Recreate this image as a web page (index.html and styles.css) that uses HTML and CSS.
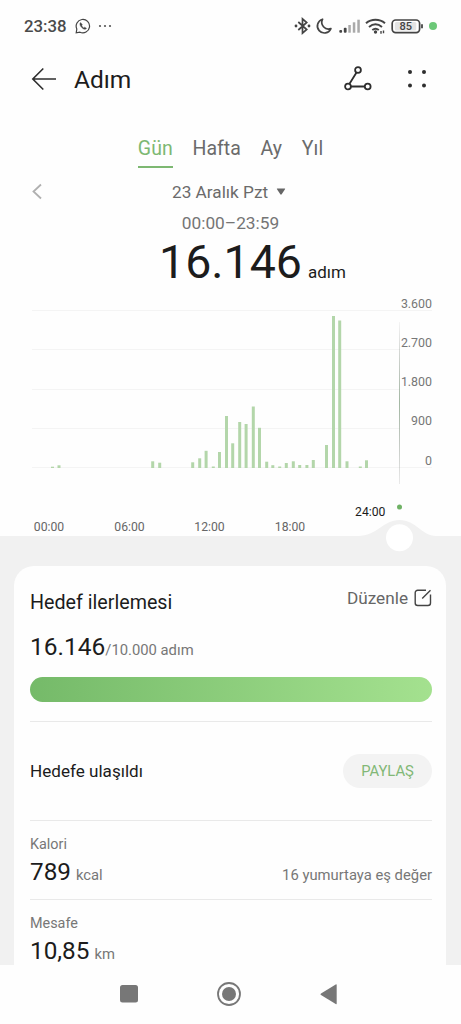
FILE: index.html
```html
<!DOCTYPE html>
<html lang="tr">
<head>
    <meta charset="UTF-8">
    <meta name="viewport" content="width=device-width, initial-scale=1.0">
    <title>Adım</title>

    <link rel="stylesheet" href="styles.css">
</head>
<body>

    <div class="phone">

        <div class="status">
            <span class="clock">23:38</span>
            <svg class="whatsapp" width="16" height="16" viewBox="0 0 16 16" fill="none" stroke="#444" stroke-width="1.2">
                <path d="M1.2 14.8l.6-3.800a6.700 6.700 0 1 1 3.200 3.200z"/>
                <path d="M5.6 4.6c-1.6 1.6.1 4 1.6 5.3 1.500 1.300 3.200 1.900 4.300.5l-1.800-1.200-.9.7c-.9-.4-1.800-1.300-2.100-2.200l.6-.9z" fill="#444" stroke="#444" stroke-width=".5"/>
            </svg>
            <svg class="more" width="14" height="4" viewBox="0 0 14 4" fill="#555">
                <circle cx="2" cy="2" r="1.1"/><circle cx="7" cy="2" r="1.1"/><circle cx="12" cy="2" r="1.1"/>
            </svg>

            <svg class="signals" width="144" height="20" viewBox="0 0 144 20" fill="none" stroke="#444" stroke-width="1.7">
                <!-- bluetooth -->
                <path d="M4.300 6l8.400 7.500-4.200 3.700V2.800l4.200 3.700L4.300 14"/>
                <circle cx="2" cy="10" r="1.400" fill="#444" stroke="none"/>
                <circle cx="15" cy="10" r="1.400" fill="#444" stroke="none"/>
                <!-- moon -->
                <path d="M28.600 3.200a7 7 0 1 0 8.300 9.400 6.700 6.700 0 0 1-8.300-9.400z" stroke-linejoin="round"/>
                <!-- mobile signal -->
                <g stroke="none">
                    <rect x="45.300" y="14" width="2.800" height="2.700" rx="1" fill="#444"/>
                    <rect x="49.800" y="11.800" width="2.800" height="5" rx="1" fill="#444"/>
                    <rect x="54.300" y="9" width="2.500" height="7.700" fill="#aaa"/>
                    <rect x="58.800" y="6.300" width="2.500" height="10.400" fill="#aaa"/>
                    <rect x="63.300" y="3.700" width="2.500" height="13" fill="#aaa"/>
                </g>
                <!-- wifi -->
                <path d="M72 7.300c5.500-4.700 13.500-4.700 19 0M75 10.900c4-3.300 9-3.300 13 0M78.300 14c2-1.600 4.500-1.600 6.500 0" stroke-width="2"/>
                <circle cx="81.500" cy="16" r="1.700" fill="#444" stroke="none"/>
                <path d="M87 15v2.700M89.500 14.500v2.700" stroke-width="1.400"/>
                <!-- battery -->
                <rect x="98.200" y="4" width="27.400" height="12.600" rx="3.500" fill="#fff"/>
                <rect x="100.800" y="6" width="21.500" height="8.400" rx="1.500" fill="#e3e3e3" stroke="none"/>
                <path d="M128 8.300v4" stroke-width="1.800"/>
                <text x="111.700" y="14.200" class="battery">85</text>
                <circle cx="139" cy="10" r="4" fill="#6cc878" stroke="none"/>
            </svg>
        </div>

        <div class="header">
            <svg class="back" width="26" height="24" viewBox="0 0 26 24" fill="none" stroke="#2e2e2e" stroke-width="1.600">
                <path d="M25 12H2M12.300 1.500L1.800 12 12.300 22.500"/>
            </svg>
            <h1>Adım</h1>
            <svg class="route" width="28" height="26" viewBox="0 0 28 26" fill="none" stroke="#2e2e2e" stroke-width="1.800">
                <path d="M12.500 6.500L5.500 17.700M7 20.500h13.700"/>
                <circle cx="14" cy="4" r="2.900"/>
                <circle cx="4" cy="20.500" r="2.900"/>
                <circle cx="23.700" cy="20.500" r="2.900"/>
            </svg>
            <svg class="menu" width="20" height="20" viewBox="0 0 20 20" fill="#2e2e2e">
                <circle cx="3" cy="3" r="2"/><circle cx="17" cy="3" r="2"/>
                <circle cx="3" cy="16.500" r="2"/><circle cx="17" cy="16.500" r="2"/>
            </svg>
        </div>

        <div class="tabs">
            <span class="tab active">Gün</span>
            <span class="tab">Hafta</span>
            <span class="tab">Ay</span>
            <span class="tab">Yıl</span>
        </div>

        <div class="date">
            <svg class="prev" width="12" height="18" viewBox="0 0 12 18" fill="none" stroke="#b0b0b0" stroke-width="1.800">
                <path d="M10 1.500L2.500 8.500 10 15.500"/>
            </svg>
            <span class="day">23 Aralık Pzt
                <svg width="10" height="8" viewBox="0 0 10 8" fill="#666"><path d="M1.300.5h7.400q.8 0 .3.700L5.700 6.300q-.7.900-1.400 0L1 1.200q-.500-.7.300-.7z"/></svg>
            </span>
        </div>
        <div class="range">00:00–23:59</div>
        <div class="total">
            <strong>16.146</strong>
            <span>adım</span>
        </div>

        <svg class="chart" width="461" height="276" viewBox="0 0 461 276">
            <defs>
                <linearGradient id="cursor" x1="0" y1="0" x2="0" y2="1">
                    <stop offset="0" stop-color="#999" stop-opacity=".1"/>
                    <stop offset=".5" stop-color="#a3b8a3"/>
                    <stop offset="1" stop-color="#999" stop-opacity=".2"/>
                </linearGradient>
            </defs>

            <g class="grid">
                <rect x="32" y="20" width="400" height="1"/>
                <rect x="32" y="59" width="368" height="1"/>
                <rect x="32" y="99" width="368" height="1"/>
                <rect x="32" y="138" width="368" height="1"/>
                <rect x="32" y="177" width="400" height="1"/>
            </g>

            <!-- one bar for each half hour -->
            <g class="bars">
                <rect x="51" y="176.700" width="3" height="1.300"/>
                <rect x="57.500" y="175.300" width="3" height="2.700"/>
                <rect x="151.200" y="171.300" width="3" height="6.700"/>
                <rect x="158.200" y="172.700" width="3" height="5.300"/>
                <rect x="191.200" y="172.300" width="3" height="5.700"/>
                <rect x="198.200" y="168.300" width="3" height="9.700"/>
                <rect x="204.600" y="160.800" width="3" height="17.200"/>
                <rect x="211.800" y="176.500" width="3" height="1.500"/>
                <rect x="218" y="162" width="3" height="16"/>
                <rect x="225" y="126" width="3" height="52"/>
                <rect x="231.200" y="153.300" width="3" height="24.700"/>
                <rect x="238.200" y="132" width="3" height="46"/>
                <rect x="244.600" y="134" width="3" height="44"/>
                <rect x="251.800" y="116.500" width="3" height="61.500"/>
                <rect x="258" y="137.800" width="3" height="40.200"/>
                <rect x="265.200" y="171.700" width="3" height="6.300"/>
                <rect x="271.300" y="175.200" width="3" height="2.800"/>
                <rect x="278.200" y="176.500" width="3" height="1.500"/>
                <rect x="284.800" y="173" width="3" height="5"/>
                <rect x="291.800" y="171.300" width="3" height="6.700"/>
                <rect x="298.200" y="175" width="3" height="3"/>
                <rect x="305.400" y="175" width="3" height="3"/>
                <rect x="311.800" y="170" width="3" height="8"/>
                <rect x="325" y="155" width="3" height="23"/>
                <rect x="332" y="26" width="3" height="152"/>
                <rect x="338.200" y="30.500" width="3" height="147.500"/>
                <rect x="345.500" y="171.300" width="3" height="6.700"/>
                <rect x="358.800" y="176.500" width="3" height="1.500"/>
                <rect x="365" y="170.300" width="3" height="7.700"/>
            </g>

            <g class="steps">
                <text x="432" y="17.500">3.600</text>
                <text x="432" y="56.800">2.700</text>
                <text x="432" y="96">1.800</text>
                <text x="432" y="135.300">900</text>
                <text x="432" y="174.700">0</text>
            </g>
            <rect x="399" y="32" width="1" height="162" fill="url(#cursor)"/>

            <g class="hours">
                <text x="49" y="241.300">00:00</text>
                <text x="129.500" y="241.300">06:00</text>
                <text x="209.500" y="241.300">12:00</text>
                <text x="290" y="241.300">18:00</text>
                <text x="370.300" y="226" class="current">24:00</text>
            </g>

            <circle cx="399.500" cy="217" r="2.500" fill="#6fb265"/>
            <path d="M0 246H358C377 246 383 230 399.500 230S422 246 436 246H461V276H0z" fill="#f1f1f1"/>
            <circle cx="399.500" cy="247.700" r="13.500" fill="#fff"/>
        </svg>

        <div class="content">
            <div class="card">
                <div class="goal">
                    <h2>Hedef ilerlemesi</h2>
                    <span class="edit">Düzenle
                        <svg width="18" height="18" viewBox="0 0 18 18" fill="none" stroke="#444" stroke-width="1.400">
                            <path d="M12 1.200H3.700a2.500 2.500 0 0 0-2.500 2.500v10.300a2.500 2.500 0 0 0 2.500 2.500h10.300a2.500 2.500 0 0 0 2.500-2.500V5.500M8.200 9.500l8.300-8.300"/>
                        </svg>
                    </span>
                </div>
                <div class="amount">16.146<small>/10.000 adım</small></div>
                <div class="progress"></div>

                <div class="reached">
                    <span>Hedefe ulaşıldı</span>
                    <span class="share">PAYLAŞ</span>
                </div>

                <div class="row">
                    <div class="label">Kalori</div>
                    <div class="value">
                        <span class="number">789</span>
                        <span class="unit">kcal</span>
                        <span class="note">16 yumurtaya eş değer</span>
                    </div>
                </div>
                <div class="row">
                    <div class="label">Mesafe</div>
                    <div class="value">
                        <span class="number">10,85</span>
                        <span class="unit">km</span>
                    </div>
                </div>
            </div>
        </div>

        <div class="nav">
            <svg width="24" height="24" viewBox="0 0 24 24" fill="#777"><rect x="3" y="3" width="18" height="17.500" rx="2.500"/></svg>
            <svg width="24" height="24" viewBox="0 0 24 24"><circle cx="12" cy="12" r="11" fill="none" stroke="#777" stroke-width="1.800"/><circle cx="12" cy="12" r="7" fill="#777"/></svg>
            <svg width="24" height="24" viewBox="0 0 24 24" fill="#777"><path d="M19.700 3v18.500q0 1.100-1 .5L4 13q-1.200-.8 0-1.600L18.700 2.400q1-.5 1 .6z"/></svg>
        </div>

    </div>

</body>
</html>
```

FILE: styles.css
```css
* {
    box-sizing: border-box;
}

body {
    margin: 0;
    background-color: #fefefe;
    color: #1c1c1c;
    font-family: Roboto, "Liberation Sans", sans-serif;
}

svg {
    display: block;
    flex: none;
}

h1, h2 {
    margin: 0;
    font-weight: 400;
}

.phone {
    width: 461px;
    height: 1024px;
    display: flex;
    flex-direction: column;
    overflow: hidden;
    white-space: nowrap;
}

.status {
    height: 51px;
    padding: 0 23px 0 24px;
    display: flex;
    align-items: center;
}

.clock {
    font-size: 16.8px;
    font-weight: 500;
    color: #4a4a4a;
}

.whatsapp {
    margin-left: 8px;
}

.more {
    margin-left: 7px;
}

.signals {
    margin-left: auto;
}

.battery {
    font-size: 11px;
    font-weight: 500;
    fill: #444;
    stroke: none;
    text-anchor: middle;
}

.header {
    height: 56px;
    padding: 0 34px 0 31px;
    display: flex;
    align-items: center;
}

.header h1 {
    margin-left: 17px;
    font-size: 24.5px;
}

.route {
    margin-left: auto;
}

.menu {
    margin-left: 35px;
}

.tabs {
    height: 31px;
    margin-top: 30px;
    display: flex;
    justify-content: center;
    gap: 19.8px;
    font-size: 19.5px;
    line-height: 24px;
    color: #6b6b6b;
}

.tab.active {
    color: #7db872;
    border-bottom: 2px solid #7db872;
}

.date {
    height: 24px;
    margin-top: 12px;
    padding-left: 31px;
    display: flex;
    align-items: center;
    font-size: 17.2px;
    line-height: 24px;
    color: #6b6b6b;
}

.day {
    margin-left: 129px;
    display: flex;
    align-items: center;
    gap: 8px;
}

.range {
    margin-top: 7px;
    text-align: center;
    font-size: 17.3px;
    line-height: 24px;
    color: #757575;
}

.total {
    height: 55px;
    display: grid;
    grid-template-columns: 1fr auto 1fr;
    align-items: baseline;
    line-height: 54px;
}

.total strong {
    grid-column: 2;
    font-size: 46.5px;
    font-weight: 400;
}

.total span {
    margin-left: 6px;
    font-size: 17px;
}

.grid {
    fill: #f4f4f4;
}

.bars {
    fill: #b3d6aa;
}

.steps {
    font-size: 12.4px;
    fill: #777;
    text-anchor: end;
}

.hours {
    font-size: 12.2px;
    fill: #666;
    text-anchor: middle;
}

.hours .current {
    fill: #1c1c1c;
}

.content {
    height: 399px;
    padding: 0 15px 0 14px;
    background-color: #f1f1f1;
    overflow: hidden;
}

.card {
    height: 420px;
    padding: 22px 14px 0 16px;
    background-color: #fefefe;
    border-radius: 20px;
}

.goal {
    height: 43px;
    display: flex;
    justify-content: space-between;
}

.goal h2 {
    font-size: 19.7px;
    line-height: 30px;
}

.edit {
    height: 19px;
    display: flex;
    align-items: center;
    gap: 6px;
    font-size: 17.2px;
    color: #666;
}

.amount {
    height: 46px;
    font-size: 24.5px;
    line-height: 32px;
}

.amount small {
    font-size: 14.8px;
    color: #777;
}

.progress {
    height: 25px;
    border-radius: 13px;
    background: linear-gradient(to right, #75ba69, #a4e18f);
}

.reached {
    height: 99px;
    margin-top: 19px;
    border-top: 1px solid #e9e9e9;
    display: flex;
    justify-content: space-between;
    align-items: center;
    font-size: 17.1px;
}

.share {
    width: 89px;
    height: 34px;
    border-radius: 17px;
    background-color: #f3f3f3;
    color: #82b876;
    font-size: 14.8px;
    line-height: 35px;
    text-align: center;
}

.row {
    height: 79px;
    padding-top: 12px;
    border-top: 1px solid #e9e9e9;
}

.label {
    font-size: 14.4px;
    line-height: 23px;
    color: #777;
}

.value {
    display: flex;
    align-items: baseline;
    line-height: 31px;
}

.number {
    font-size: 24.3px;
}

.unit {
    margin-left: 5px;
    font-size: 14.8px;
    color: #777;
}

.note {
    margin-left: auto;
    font-size: 14.8px;
    color: #777;
}

.nav {
    height: 57px;
    padding-left: 117px;
    display: flex;
    align-items: center;
    gap: 76px;
}
```
